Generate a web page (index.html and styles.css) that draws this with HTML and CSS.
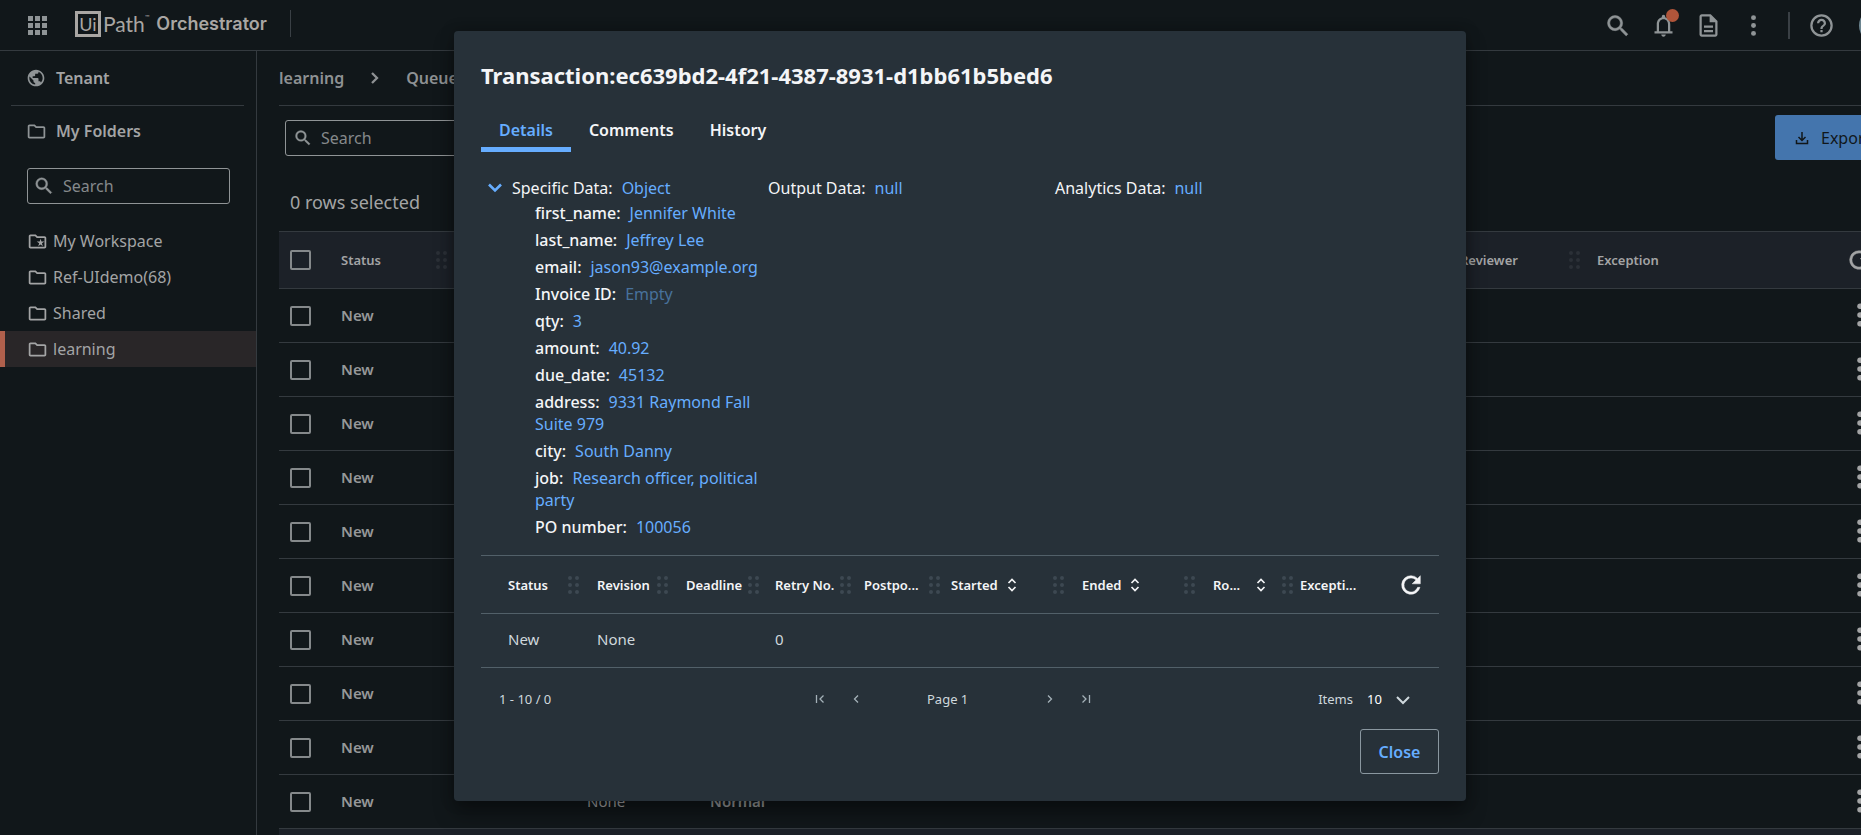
FILE: index.html
```html
<!DOCTYPE html>
<html lang="en">
<head>
<meta charset="utf-8">
<title>Orchestrator - Queues</title>
<link rel="stylesheet" href="styles.css">
</head>
<body>
<svg class="sprite" aria-hidden="true">
  <symbol id="i-search" viewBox="0 0 24 24"><path d="M15.5 14h-.79l-.28-.27A6.47 6.47 0 0 0 16 9.5 6.5 6.5 0 1 0 9.5 16c1.61 0 3.09-.59 4.23-1.57l.27.28v.79l5 4.99L20.49 19l-4.99-5zm-6 0C7.01 14 5 11.99 5 9.5S7.01 5 9.5 5 14 7.01 14 9.5 11.99 14 9.5 14z" stroke="currentColor" stroke-width=".4"/></symbol>
  <symbol id="i-folder" viewBox="0 0 24 24"><path d="M9.17 6l2 2H20v10H4V6h5.17M10 4H4c-1.1 0-1.99.9-1.99 2L2 18c0 1.1.9 2 2 2h16c1.1 0 2-.9 2-2V8c0-1.100-.9-2-2-2h-8l-2-2z"/></symbol>
  <symbol id="i-workspace" viewBox="0 0 24 24"><path d="M20 6h-8l-2-2H4c-1.100 0-1.990.9-1.990 2L2 18c0 1.100.9 2 2 2h16c1.100 0 2-.9 2-2V8c0-1.100-.9-2-2-2zm0 12H4V6h5.170l2 2H20v10zM11.080 12.040l2.840 1.990L12.850 17.500 15.500 15.500l2.650 2-1.070-3.470 2.840-1.990h-3.400L15.500 8.800l-1.020 3.240z"/></symbol>
  <symbol id="i-globe" viewBox="0 0 24 24"><path d="M12 2C6.480 2 2 6.480 2 12s4.480 10 10 10 10-4.480 10-10S17.520 2 12 2zm-1 17.930c-3.950-.49-7-3.850-7-7.930 0-.62.08-1.210.21-1.790L9 15v1c0 1.100.9 2 2 2v1.930zm6.900-2.540c-.26-.81-1-1.390-1.900-1.390h-1v-3c0-.55-.45-1-1-1H8v-2h2c.55 0 1-.45 1-1V7h2c1.100 0 2-.9 2-2v-.41c2.930 1.190 5 4.060 5 7.410 0 2.080-.8 3.970-2.100 5.390z"/></symbol>
  <symbol id="i-kebab" viewBox="0 0 24 24"><circle cx="12" cy="5" r="2.200"/><circle cx="12" cy="12" r="2.200"/><circle cx="12" cy="19" r="2.200"/></symbol>
  <symbol id="i-grip" viewBox="0 0 12 18"><circle cx="2" cy="2" r="2"/><circle cx="9" cy="2" r="2"/><circle cx="2" cy="9" r="2"/><circle cx="9" cy="9" r="2"/><circle cx="2" cy="16" r="2"/><circle cx="9" cy="16" r="2"/></symbol>
  <symbol id="i-refresh" viewBox="0 0 24 24"><path d="M17.650 6.350A7.960 7.960 0 0 0 12 4a8 8 0 1 0 7.730 10h-2.080A6 6 0 1 1 12 6c1.660 0 3.140.69 4.220 1.780L13 11h7V4l-2.350 2.350z" stroke="currentColor" stroke-width=".4"/></symbol>
  <symbol id="i-sort" viewBox="0 0 10 14"><path d="M1.500 5L5 1.500 8.500 5M1.500 9L5 12.500 8.500 9" fill="none" stroke="currentColor" stroke-width="1.700"/></symbol>
  <symbol id="i-down" viewBox="0 0 14 10"><path d="M1 2l6 6 6-6" fill="none" stroke="currentColor" stroke-width="2"/></symbol>
</svg>

<div class="app">
  <header class="topbar">
    <button class="icon-btn apps" aria-label="Apps"><svg width="19" height="19" viewBox="0 0 19 19"><path d="M0 0h5v5H0zM7 0h5v5H7zM14 0h5v5h-5zM0 7h5v5H0zM7 7h5v5H7zM14 7h5v5h-5zM0 14h5v5H0zM7 14h5v5H7zM14 14h5v5h-5z"/></svg></button>
    <a class="brand" href="#"><span class="brand-box">Ui</span><span class="brand-path">Path</span><span class="brand-tm">™</span><span class="brand-product">Orchestrator</span></a>
    <span class="bar-divider"></span>
    <div class="top-actions">
      <button class="icon-btn" aria-label="Search"><svg width="28" height="28"><use href="#i-search"/></svg></button>
      <button class="icon-btn bell" aria-label="Notifications"><svg width="27" height="27" viewBox="0 0 24 24"><path d="M12 22c1.100 0 2-.9 2-2h-4c0 1.100.9 2 2 2zm6-5v-6c0-3.070-1.630-5.640-4.500-6.320V4a1.500 1.500 0 0 0-3 0v.68C7.640 5.360 6 7.920 6 11v6H4v2h16v-2h-2zm-2 0H8v-6c0-2.480 1.510-4.500 4-4.500s4 2.020 4 4.500v6z"/></svg><span class="dot"></span></button>
      <button class="icon-btn" aria-label="Documents"><svg width="27" height="27" viewBox="0 0 24 24"><path d="M8 16h8v2H8zm0-4h8v2H8zm6-10H6c-1.100 0-2 .9-2 2v16c0 1.100.89 2 1.990 2H18c1.100 0 2-.9 2-2V8l-6-6zm4 18H6V4h7v5h5v11z"/></svg></button>
      <button class="icon-btn" aria-label="More"><svg width="27" height="27"><use href="#i-kebab"/></svg></button>
      <span class="bar-divider strong"></span>
      <button class="icon-btn help" aria-label="Help"><svg width="27" height="27" viewBox="0 0 24 24"><path d="M11 18h2v-2h-2v2zm1-16a10 10 0 1 0 0 20 10 10 0 0 0 0-20zm0 18a8 8 0 1 1 0-16 8 8 0 0 1 0 16zm0-14a4 4 0 0 0-4 4h2c0-1.100.9-2 2-2s2 .9 2 2c0 2-3 1.750-3 5h2c0-2.250 3-2.500 3-5a4 4 0 0 0-4-4z"/></svg></button>
      <button class="avatar" aria-label="Account"></button>
    </div>
  </header>

  <div class="body">
    <nav class="sidebar">
      <a class="side-head" href="#"><svg width="20" height="20"><use href="#i-globe"/></svg>Tenant</a>
      <hr class="side-rule">
      <a class="side-head folders" href="#"><svg width="21" height="21"><use href="#i-folder"/></svg>My Folders</a>
      <label class="search side-search"><svg width="22" height="22"><use href="#i-search"/></svg><input type="text" placeholder="Search" aria-label="Search folders"></label>
      <ul class="tree">
        <li><a href="#"><svg width="21" height="21"><use href="#i-workspace"/></svg>My Workspace</a></li>
        <li><a href="#"><svg width="21" height="21"><use href="#i-folder"/></svg>Ref-UIdemo(68)</a></li>
        <li><a href="#"><svg width="21" height="21"><use href="#i-folder"/></svg>Shared</a></li>
        <li><a class="active" href="#"><svg width="21" height="21"><use href="#i-folder"/></svg>learning</a></li>
      </ul>
    </nav>

    <main class="main">
      <div class="crumbs"><a href="#">learning</a><svg width="8" height="12" viewBox="0 0 8 12"><path d="M1 1l5 5-5 5" fill="none" stroke="currentColor" stroke-width="2.300"/></svg><a href="#">Queues</a></div>
      <div class="toolbar">
        <label class="search main-search"><svg width="20" height="20"><use href="#i-search"/></svg><input type="text" placeholder="Search" aria-label="Search transactions"></label>
        <button class="export"><svg width="18" height="18" viewBox="0 0 18 18"><path d="M9 3v8M5.500 8L9 11.500 12.500 8M3.500 11v3.500h11V11" fill="none" stroke="currentColor" stroke-width="1.500"/></svg>Export</button>
      </div>
      <p class="selected">0 rows selected</p>
      <table class="queue">
        <colgroup><col class="q-check"><col class="q-col"><col class="q-col"><col class="q-col"><col class="q-col"><col><col class="q-review"><col class="q-exc"><col class="q-act"></colgroup>
        <thead>
          <tr><th><input type="checkbox" aria-label="Select all"></th><th><div class="th">Status<svg class="grip" width="12" height="18"><use href="#i-grip"/></svg></div></th><th></th><th></th><th></th><th></th><th><div class="th">Reviewer<svg class="grip" width="12" height="18"><use href="#i-grip"/></svg></div></th><th>Exception</th><th><button class="icon-btn" aria-label="Refresh"><svg width="28" height="28"><use href="#i-refresh"/></svg></button></th></tr>
        </thead>
        <tbody>
          <tr><td><input type="checkbox" aria-label="Select row 1"></td><td class="strong">New</td><td></td><td></td><td></td><td></td><td></td><td></td><td><button class="icon-btn" aria-label="Row actions"><svg width="30" height="30"><use href="#i-kebab"/></svg></button></td></tr>
          <tr><td><input type="checkbox" aria-label="Select row 2"></td><td class="strong">New</td><td></td><td></td><td></td><td></td><td></td><td></td><td><button class="icon-btn" aria-label="Row actions"><svg width="30" height="30"><use href="#i-kebab"/></svg></button></td></tr>
          <tr><td><input type="checkbox" aria-label="Select row 3"></td><td class="strong">New</td><td></td><td></td><td></td><td></td><td></td><td></td><td><button class="icon-btn" aria-label="Row actions"><svg width="30" height="30"><use href="#i-kebab"/></svg></button></td></tr>
          <tr><td><input type="checkbox" aria-label="Select row 4"></td><td class="strong">New</td><td></td><td></td><td></td><td></td><td></td><td></td><td><button class="icon-btn" aria-label="Row actions"><svg width="30" height="30"><use href="#i-kebab"/></svg></button></td></tr>
          <tr><td><input type="checkbox" aria-label="Select row 5"></td><td class="strong">New</td><td></td><td></td><td></td><td></td><td></td><td></td><td><button class="icon-btn" aria-label="Row actions"><svg width="30" height="30"><use href="#i-kebab"/></svg></button></td></tr>
          <tr><td><input type="checkbox" aria-label="Select row 6"></td><td class="strong">New</td><td></td><td></td><td></td><td></td><td></td><td></td><td><button class="icon-btn" aria-label="Row actions"><svg width="30" height="30"><use href="#i-kebab"/></svg></button></td></tr>
          <tr><td><input type="checkbox" aria-label="Select row 7"></td><td class="strong">New</td><td></td><td></td><td></td><td></td><td></td><td></td><td><button class="icon-btn" aria-label="Row actions"><svg width="30" height="30"><use href="#i-kebab"/></svg></button></td></tr>
          <tr><td><input type="checkbox" aria-label="Select row 8"></td><td class="strong">New</td><td></td><td></td><td></td><td></td><td></td><td></td><td><button class="icon-btn" aria-label="Row actions"><svg width="30" height="30"><use href="#i-kebab"/></svg></button></td></tr>
          <tr><td><input type="checkbox" aria-label="Select row 9"></td><td class="strong">New</td><td></td><td></td><td></td><td></td><td></td><td></td><td><button class="icon-btn" aria-label="Row actions"><svg width="30" height="30"><use href="#i-kebab"/></svg></button></td></tr>
          <tr><td><input type="checkbox" aria-label="Select row 10"></td><td class="strong">New</td><td></td><td>None</td><td class="strong">Normal</td><td></td><td></td><td></td><td><button class="icon-btn" aria-label="Row actions"><svg width="30" height="30"><use href="#i-kebab"/></svg></button></td></tr>
        </tbody>
      </table>
      <div class="queue-foot"></div>
    </main>
  </div>

  <div class="overlay">
    <section class="modal" role="dialog" aria-labelledby="dlg-title">
      <h1 class="title" id="dlg-title">Transaction:ec639bd2-4f21-4387-8931-d1bb61b5bed6</h1>
      <div class="tabs" role="tablist">
        <button class="tab active" role="tab" aria-selected="true">Details</button>
        <button class="tab" role="tab">Comments</button>
        <button class="tab" role="tab">History</button>
      </div>
      <div class="details">
        <div class="data">
          <div class="data-head"><button class="expander" aria-label="Collapse"><svg width="14" height="10" viewBox="0 0 14 10"><path d="M1 1.500l6 6 6-6" fill="none" stroke="currentColor" stroke-width="2.600"/></svg></button><span class="key">Specific Data:</span><span class="val">Object</span></div>
          <ul class="props">
            <li><span class="key">first_name:</span><span class="val">Jennifer White</span></li>
            <li><span class="key">last_name:</span><span class="val">Jeffrey Lee</span></li>
            <li><span class="key">email:</span><span class="val">jason93@example.org</span></li>
            <li><span class="key">Invoice ID:</span><span class="val empty">Empty</span></li>
            <li><span class="key">qty:</span><span class="val">3</span></li>
            <li><span class="key">amount:</span><span class="val">40.92</span></li>
            <li><span class="key">due_date:</span><span class="val">45132</span></li>
            <li><span class="key">address:</span><span class="val">9331 Raymond Fall Suite 979</span></li>
            <li><span class="key">city:</span><span class="val">South Danny</span></li>
            <li><span class="key">job:</span><span class="val">Research officer, political party</span></li>
            <li><span class="key">PO number:</span><span class="val">100056</span></li>
          </ul>
        </div>
        <div class="data"><div class="data-head"><span class="key">Output Data:</span><span class="val">null</span></div></div>
        <div class="data"><div class="data-head"><span class="key">Analytics Data:</span><span class="val">null</span></div></div>
      </div>
      <table class="runs">
        <colgroup><col class="r-first"><col class="r-s"><col class="r-s"><col class="r-s"><col class="r-t"><col class="r-m"><col class="r-m"><col class="r-t"><col></colgroup>
        <thead>
          <tr>
            <th><div class="th">Status<svg class="grip" width="12" height="18"><use href="#i-grip"/></svg></div></th>
            <th><div class="th">Revision<svg class="grip" width="12" height="18"><use href="#i-grip"/></svg></div></th>
            <th><div class="th">Deadline<svg class="grip" width="12" height="18"><use href="#i-grip"/></svg></div></th>
            <th><div class="th">Retry No.<svg class="grip" width="12" height="18"><use href="#i-grip"/></svg></div></th>
            <th class="tight"><div class="th">Postpo...<svg class="grip" width="12" height="18"><use href="#i-grip"/></svg></div></th>
            <th><div class="th sortable">Started<svg width="10" height="14"><use href="#i-sort"/></svg><svg class="grip" width="12" height="18"><use href="#i-grip"/></svg></div></th>
            <th><div class="th sortable">Ended<svg width="10" height="14"><use href="#i-sort"/></svg><svg class="grip" width="12" height="18"><use href="#i-grip"/></svg></div></th>
            <th class="tight"><div class="th wide">Ro...<svg width="10" height="14"><use href="#i-sort"/></svg><svg class="grip" width="12" height="18"><use href="#i-grip"/></svg></div></th>
            <th class="last"><div class="th">Excepti...<button class="icon-btn refresh" aria-label="Refresh"><svg width="28" height="28"><use href="#i-refresh"/></svg></button></div></th>
          </tr>
        </thead>
        <tbody><tr><td>New</td><td>None</td><td></td><td>0</td><td></td><td></td><td></td><td></td><td></td></tr></tbody>
      </table>
      <div class="pager">
        <span class="range">1 - 10 / 0</span>
        <div class="pages">
          <button class="icon-btn" aria-label="First page"><svg width="10" height="10" viewBox="0 0 10 10"><path d="M1.500 1v8M8.500 1.500L5 5l3.500 3.500" fill="none" stroke="currentColor" stroke-width="1.300"/></svg></button>
          <button class="icon-btn" aria-label="Previous page"><svg width="10" height="10" viewBox="0 0 10 10"><path d="M7 1.500L3.500 5 7 8.500" fill="none" stroke="currentColor" stroke-width="1.300"/></svg></button>
          <span class="page">Page 1</span>
          <button class="icon-btn" aria-label="Next page"><svg width="10" height="10" viewBox="0 0 10 10"><path d="M3 1.500L6.500 5 3 8.500" fill="none" stroke="currentColor" stroke-width="1.300"/></svg></button>
          <button class="icon-btn" aria-label="Last page"><svg width="10" height="10" viewBox="0 0 10 10"><path d="M8.500 1v8M1.500 1.500L5 5 1.500 8.500" fill="none" stroke="currentColor" stroke-width="1.300"/></svg></button>
        </div>
        <div class="items"><label for="items">Items</label><span class="select"><select id="items"><option>10</option></select><svg width="14" height="10"><use href="#i-down"/></svg></span></div>
      </div>
      <div class="actions"><button class="close">Close</button></div>
    </section>
  </div>
</div>
</body>
</html>
```
FILE: styles.css
```css
:root {
  --bg: #11171a;
  --line: #343a3f;
  --text: #a3a4a5;
  --icon: #8f9496;
  --panel: #273139;
  --panel-line: #526069;
  --panel-text: #f4f5f7;
  --blue: #66adff;
}
* { box-sizing: border-box; }
body {
  margin: 0;
  overflow: hidden;
  background: var(--bg);
  color: var(--text);
  font: 16px/22px "Noto Sans", sans-serif;
}
button, input, select { font: inherit; color: inherit; }
button { background: none; border: 0; padding: 0; cursor: pointer; }
a { color: inherit; text-decoration: none; }
ul { list-style: none; margin: 0; padding: 0; }
svg { fill: currentColor; display: block; flex: none; }
.sprite { position: absolute; width: 0; height: 0; }

.app {
  position: relative;
  display: flex;
  flex-direction: column;
  width: calc(100% + 59px);
  height: 100vh;
  overflow: hidden;
}
.icon-btn { display: grid; place-items: center; color: var(--icon); }

.topbar {
  flex: none;
  display: flex;
  align-items: center;
  height: 51px;
  padding: 0 26px 3px 28px;
  border-bottom: 1px solid var(--line);
}
.apps { margin-top: 4px; }
.brand {
  display: flex;
  align-items: center;
  margin-left: 28px;
  font-family: Lato, sans-serif;
  font-size: 20px;
  line-height: 21px;
  color: #a9a6a3;
}
.brand-box {
  width: 26px;
  height: 26px;
  border: 3px solid currentColor;
  line-height: 20px;
  text-align: center;
  font-size: 18px;
  font-weight: 400;
}
.brand-path { margin-left: 2px; font-size: 21px; }
.brand-tm { align-self: flex-start; font-size: 6px; line-height: 12px; }
.brand-product { margin-left: 7px; font: 600 18px/22px Inter, sans-serif; }
.bar-divider { width: 1px; height: 27px; margin-left: 23px; background: #3a4045; }
.bar-divider.strong { width: 2px; margin: 0; }
.top-actions { display: flex; align-items: center; gap: 18px; margin-left: auto; padding-top: 4px; }
.top-actions .bar-divider { margin-left: 3px; }
.bell { position: relative; }
.dot { position: absolute; top: -3px; right: -2px; width: 13px; height: 13px; border-radius: 50%; background: #b0553a; }
.avatar { width: 35px; height: 35px; margin-left: 6px; border-radius: 50%; background: #6c8590; }

.body { flex: 1; display: flex; min-height: 0; }
.sidebar { flex: none; width: 257px; border-right: 1px solid var(--line); }
.side-head { display: flex; align-items: center; gap: 10px; height: 54px; padding-left: 26px; font-weight: 600; }
.side-head svg { color: var(--icon); }
.side-rule { margin: 0 12px 0 11px; border: 0; border-top: 1px solid var(--line); }
.side-head.folders { height: 50px; gap: 9px; }
.search {
  display: flex;
  align-items: center;
  height: 36px;
  border: 1px solid #909496;
  border-radius: 3px;
  color: var(--icon);
}
.search input { width: 100%; min-width: 0; padding: 0; border: 0; outline: 0; background: none; }
.search input::placeholder { color: #85898b; opacity: 1; }
.side-search { margin: 12px 26px 19px 27px; padding-left: 5px; gap: 8px; }
.tree a { display: flex; align-items: center; gap: 5px; height: 36px; padding-left: 27px; }
.tree a.active { padding-left: 22px; border-left: 5px solid #b0604c; background: #292628; }

.main { flex: 1; min-width: 0; padding: 0 22px; }
.crumbs { display: flex; align-items: center; gap: 27px; height: 55px; border-bottom: 1px solid var(--line); font-weight: 600; color: #8e9193; }
.toolbar { display: flex; align-items: flex-start; justify-content: space-between; padding: 9px 0 0 6px; }
.main-search { width: 338px; margin-top: 5px; padding-left: 7px; gap: 8px; }
.export {
  display: flex;
  align-items: center;
  gap: 10px;
  width: 123px;
  height: 45px;
  padding-left: 18px;
  border-radius: 3px;
  background: #4475ad;
  color: #11171a;
}
.selected { margin: 30px 0 17px; padding-left: 11px; font-size: 18px; line-height: 24px; }

table { width: 100%; table-layout: fixed; border-collapse: separate; border-spacing: 0; }
th, td { padding: 0 0 0 9px; border-bottom: 1px solid var(--line); text-align: left; font-weight: 400; white-space: nowrap; }
th { font-size: 13px; line-height: 20px; font-weight: 600; }
td { height: 54px; padding-bottom: 2px; font-size: 15px; line-height: 22px; }
.th { display: flex; align-items: center; gap: 6px; }
.grip { margin-left: auto; }
.queue th { height: 58px; border-top: 1px solid var(--line); background: #1c2128; }
.queue th:first-child, .queue td:first-child { padding-left: 11px; padding-bottom: 0; }
.queue .grip { color: #2b3037; }
.queue .th { padding-right: 7px; }
.queue .strong { font-weight: 600; color: #969899; }
.queue .icon-btn { color: var(--text); }
.queue input {
  appearance: none;
  display: block;
  width: 21px;
  height: 20px;
  margin: 0;
  border: 2px solid #85898b;
  border-radius: 2px;
}
.q-check { width: 53px; }
.q-col { width: 123px; }
.q-review { width: 137px; }
.q-exc { width: 248px; }
.q-act { width: 62px; }
.queue-foot { height: 54px; background: #1c2128; }

.overlay { position: absolute; inset: 0; display: grid; place-items: center; padding-bottom: 3px; }
.modal {
  width: 1012px;
  max-width: 90%;
  padding: 27px;
  border-radius: 4px;
  background: var(--panel);
  color: var(--panel-text);
  box-shadow: 0 12px 20px rgba(0, 0, 0, .35), 0 0 14px rgba(0, 0, 0, .25);
}
.title { margin: 0 0 21px; font-size: 22px; line-height: 34px; font-weight: 700; }
.tabs { display: flex; }
.tab { padding: 6px 18px; border-bottom: 5px solid transparent; font-weight: 600; line-height: 22px; }
.tab.active { border-color: var(--blue); color: var(--blue); }
.details { display: grid; grid-template-columns: 287px 287px 1fr; padding: 25px 0 17px; }
.data-head { display: flex; gap: 9px; }
.expander { width: 22px; padding-left: 7px; color: var(--blue); }
.val { color: var(--blue); }
.val.empty { color: #48719c; }
.props { display: grid; gap: 5px; margin-top: 3px; padding-left: 54px; }
.props .key { margin-right: 9px; font-weight: 500; }

.runs th, .runs td { border-color: var(--panel-line); }
.runs th { height: 59px; border-top: 1px solid var(--panel-line); }
.runs td { padding-bottom: 3px; color: #cfd8dd; }
.runs th:first-child, .runs td:first-child { padding-left: 27px; }
.runs .th { padding-right: 8px; }
.runs .tight .th { padding-right: 1px; }
.runs .grip { color: #3d4852; }
.runs .sortable { gap: 9px; }
.runs .wide { gap: 16px; }
.r-first { width: 107px; }
.r-s { width: 89px; }
.r-t { width: 87px; }
.r-m { width: 131px; }
.runs .last .th { justify-content: space-between; padding-right: 14px; }
.refresh { color: var(--panel-text); }

.pager { display: grid; grid-template-columns: 1fr auto 1fr; align-items: center; height: 61px; padding-right: 14px; font-size: 13px; line-height: 20px; color: #cfd8dd; }
.range { padding-left: 18px; }
.pages { display: flex; align-items: center; }
.pages .icon-btn { width: 36px; height: 36px; color: #a4b1b8; }
.page { width: 158px; padding-left: 53px; }
.items { display: flex; justify-content: flex-end; gap: 14px; padding-right: 15px; }
.select { position: relative; display: block; }
.select select { appearance: none; width: 43px; padding: 0; border: 0; background: none; color: #fff; }
.select svg { position: absolute; right: 0; top: 6px; pointer-events: none; }
.actions { display: flex; justify-content: flex-end; }
.close { width: 79px; height: 45px; border: 1px solid #8a97a0; border-radius: 3px; color: var(--blue); font-weight: 600; }
```
